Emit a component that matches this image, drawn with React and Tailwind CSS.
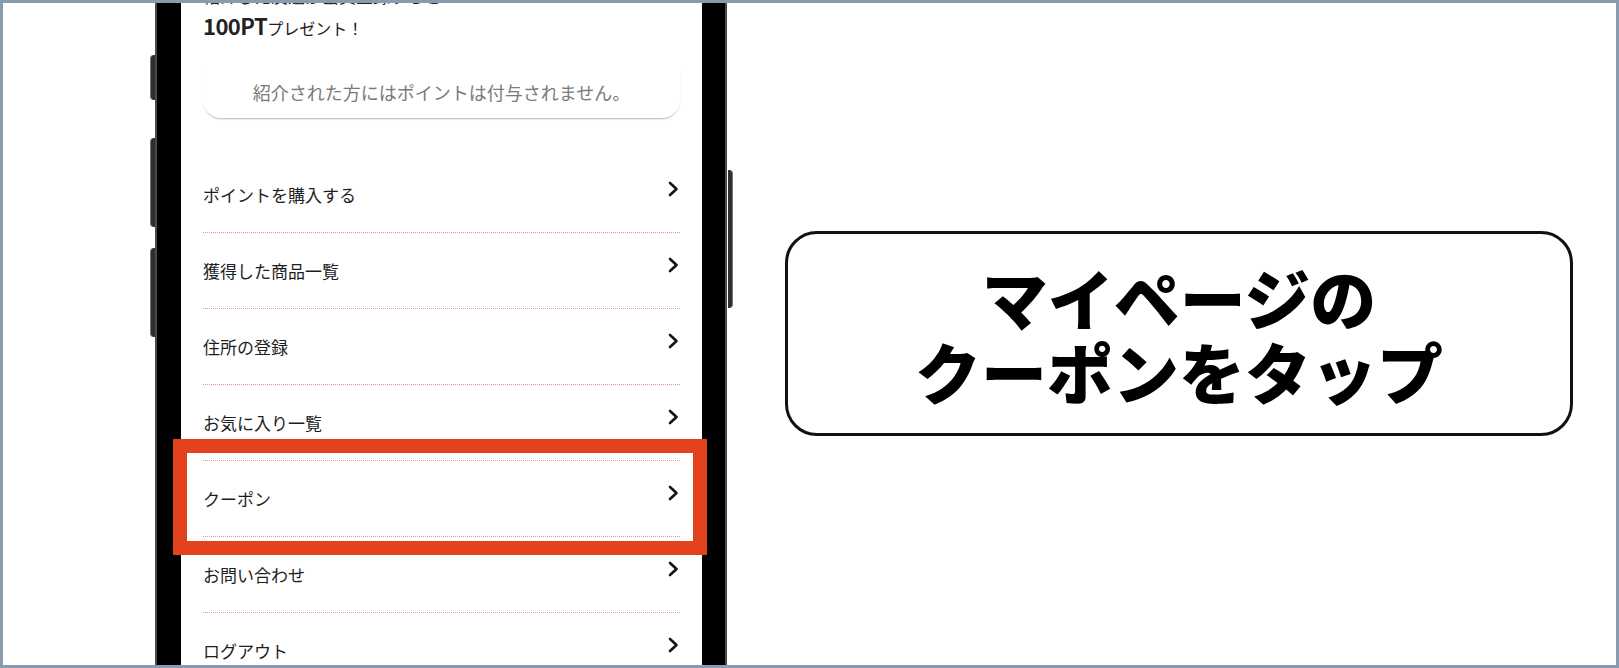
import { ChevronRight } from 'lucide-react';

const menuItems = [
  'ポイントを購入する',
  '獲得した商品一覧',
  '住所の登録',
  'お気に入り一覧',
  'クーポン',
  'お問い合わせ',
  'ログアウト',
];

const jp = { fontFamily: '"Noto Sans CJK JP", "Noto Sans", sans-serif' };

const Chevron = () => (
  <svg width="11" height="16" viewBox="0 0 11 16" className="shrink-0">
    <polyline points="2,2 8.5,8 2,14" fill="none" stroke="#111" strokeWidth="2.6" strokeLinecap="round" strokeLinejoin="round" />
  </svg>
);

const Phone = () => {
  return (
    <div className="relative -mt-[3px] ml-[152px] h-[671px] w-[572px] shrink-0 bg-black border-x-[2px] border-[#4a4a4a]">
      {/* side buttons */}
      <div className="absolute -left-[7px] top-[55px] h-[45px] w-[5px] rounded-l-sm bg-[#2e2e2e] border-l border-[#777]" />
      <div className="absolute -left-[7px] top-[138px] h-[89px] w-[5px] rounded-l-sm bg-[#2e2e2e] border-l border-[#777]" />
      <div className="absolute -left-[7px] top-[248px] h-[89px] w-[5px] rounded-l-sm bg-[#2e2e2e] border-l border-[#777]" />
      <div className="absolute -right-[8px] top-[170px] h-[138px] w-[5px] rounded-r-sm bg-[#2e2e2e] border-r border-[#777]" />

      {/* screen */}
      <div className="ml-[24px] h-full w-[521px] overflow-hidden bg-white" style={jp}>
        <div className="-mt-[19px] px-[22px]">
          <p className="h-[30px] text-[17px] leading-[30px] text-[#222]">紹介した友達が会員登録すると</p>
          <p className="h-[30px] leading-[28px] text-[#222]">
            <span className="text-[22px] font-bold tracking-tight">100PT</span>
            <span className="text-[16px]">プレゼント！</span>
          </p>

          <div className="mt-[25px] flex h-[52px] items-center justify-center rounded-b-[18px] shadow-[0_2px_2px_-1px_rgba(0,0,0,0.3)]">
            <span className="text-[18px] text-[#7a7a7a]">紹介された方にはポイントは付与されません。</span>
          </div>

          <ul className="mt-[39px]">
            {menuItems.map((item) => (
              <li
                key={item}
                className="flex h-[76px] items-start justify-between border-b border-dotted border-[#e7909a]"
              >
                <span className="mt-[25px] text-[17px] leading-[26px] text-[#1e1e1e]">{item}</span>
                <span className="mt-[24px] mr-[1px]">
                  <Chevron />
                </span>
              </li>
            ))}
          </ul>
        </div>
      </div>
    </div>
  );
};

const App = () => {
  return (
    <div className="relative flex h-[668px] w-[1619px] items-center overflow-hidden border-[3px] border-[#8a9bb0] bg-white">
      <div className="self-start">
        <Phone />
      </div>

      {/* highlight around coupon row */}
      <div className="absolute left-[170px] top-[436px] h-[116px] w-[534px] border-[14px] border-[#e4411f]" />

      {/* callout */}
      <div
        className="ml-[58px] flex h-[205px] w-[788px] flex-col items-center justify-center gap-[2px] rounded-[32px] border-[3px] border-[#111] -mt-[2px]"
        style={jp}
      >
        <p className="text-[66px] font-black leading-[72px] text-black">マイページの</p>
        <p className="text-[66px] font-black leading-[72px] text-black">クーポンをタップ</p>
      </div>
    </div>
  );
};

export default App;
